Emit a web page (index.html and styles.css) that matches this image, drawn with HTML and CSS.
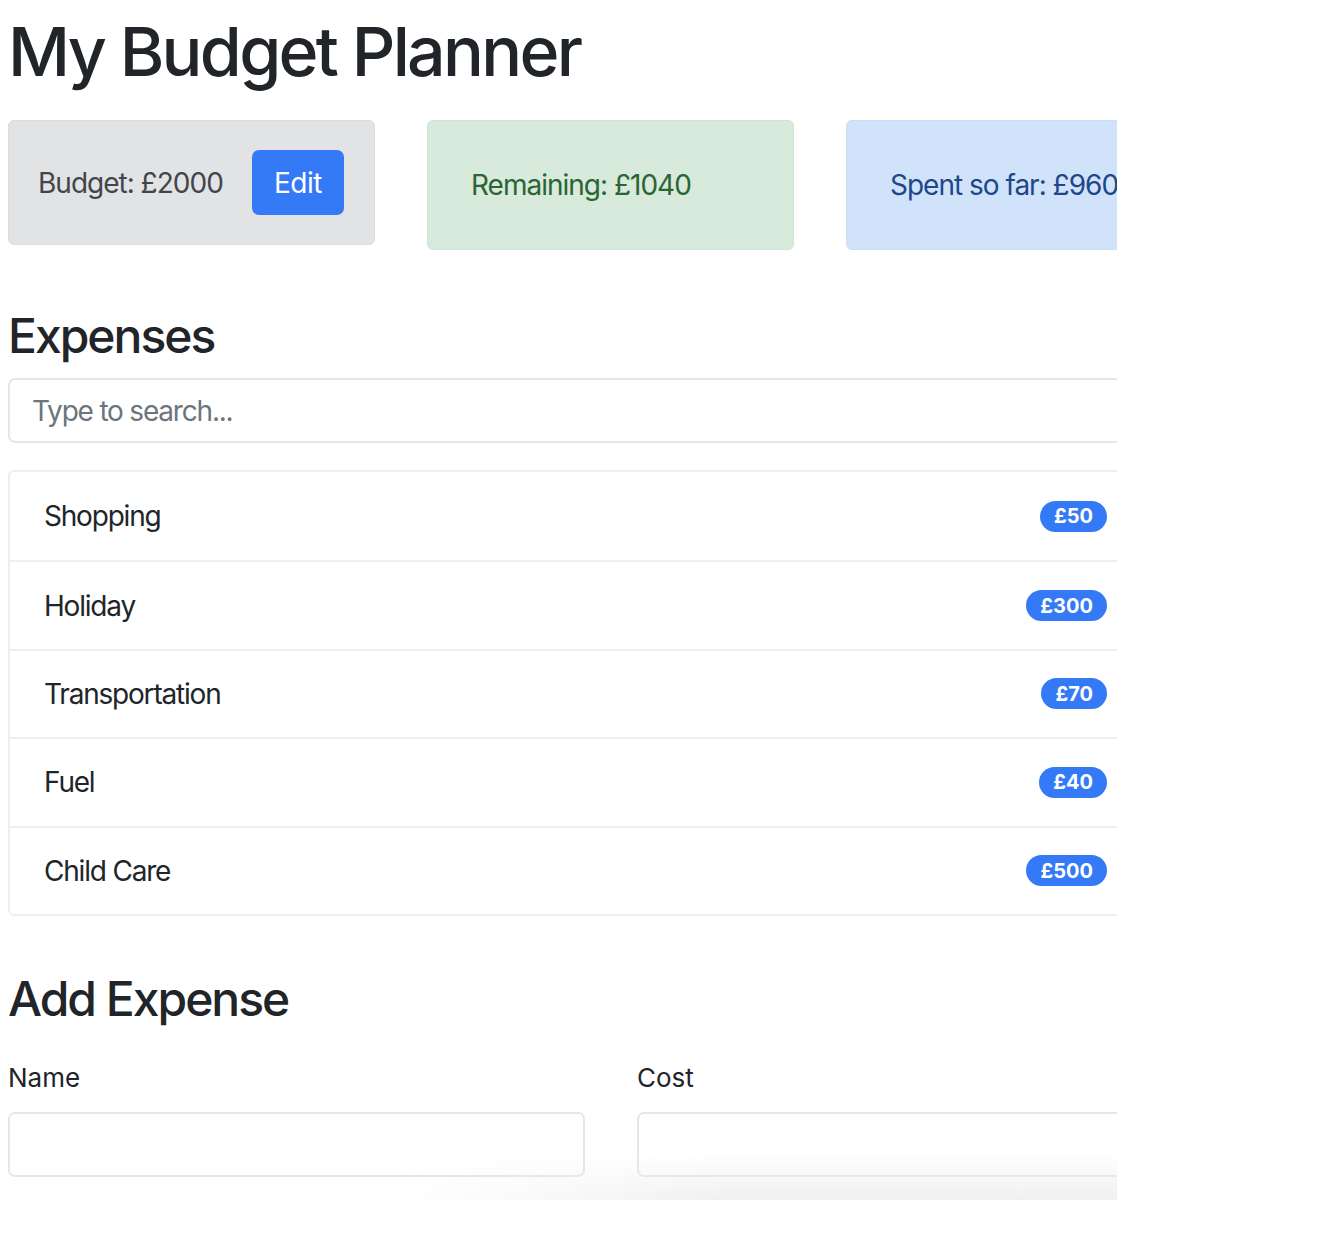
FILE: index.html
```html
<!DOCTYPE html>
<html lang="en">
<head>
<meta charset="utf-8">
<title>My Budget Planner</title>
<link rel="stylesheet" href="styles.css">
</head>
<body>
<div class="frame">
  <div class="page">
    <h1 class="title">My Budget Planner</h1>
    <div class="cards">
      <div class="card card-budget"><span>Budget: £2000</span><button class="btn" type="button">Edit</button></div>
      <div class="card card-remaining"><span>Remaining: £1040</span></div>
      <div class="card card-spent"><span>Spent so far: £960</span></div>
    </div>
    <h3 class="section section-expenses">Expenses</h3>
    <input class="field search" type="text" placeholder="Type to search...">
    <ul class="list">
      <li class="item"><span>Shopping</span><div class="item-end"><span class="badge">£50</span><svg class="del" viewBox="0 0 24 24"><circle cx="12" cy="12" r="9" fill="none" stroke="currentColor" stroke-width="2"/><path d="M9 9l6 6M15 9l-6 6" stroke="currentColor" stroke-width="2"/></svg></div></li>
      <li class="item"><span>Holiday</span><div class="item-end"><span class="badge">£300</span><svg class="del" viewBox="0 0 24 24"><circle cx="12" cy="12" r="9" fill="none" stroke="currentColor" stroke-width="2"/><path d="M9 9l6 6M15 9l-6 6" stroke="currentColor" stroke-width="2"/></svg></div></li>
      <li class="item"><span>Transportation</span><div class="item-end"><span class="badge">£70</span><svg class="del" viewBox="0 0 24 24"><circle cx="12" cy="12" r="9" fill="none" stroke="currentColor" stroke-width="2"/><path d="M9 9l6 6M15 9l-6 6" stroke="currentColor" stroke-width="2"/></svg></div></li>
      <li class="item"><span>Fuel</span><div class="item-end"><span class="badge">£40</span><svg class="del" viewBox="0 0 24 24"><circle cx="12" cy="12" r="9" fill="none" stroke="currentColor" stroke-width="2"/><path d="M9 9l6 6M15 9l-6 6" stroke="currentColor" stroke-width="2"/></svg></div></li>
      <li class="item"><span>Child Care</span><div class="item-end"><span class="badge">£500</span><svg class="del" viewBox="0 0 24 24"><circle cx="12" cy="12" r="9" fill="none" stroke="currentColor" stroke-width="2"/><path d="M9 9l6 6M15 9l-6 6" stroke="currentColor" stroke-width="2"/></svg></div></li>
    </ul>
    <h3 class="section section-add">Add Expense</h3>
    <div class="form-row">
      <div class="form-col"><label class="label" for="name">Name</label><input class="field" id="name" type="text"></div>
      <div class="form-col"><label class="label" for="cost">Cost</label><input class="field" id="cost" type="text"></div>
    </div>
  </div>
</div>
</body>
</html>
```

FILE: styles.css
```css
html, body {
  margin: 0;
  padding: 0;
  background: #ffffff;
}

body {
  font-family: "Inter", "Roboto", "Liberation Sans", sans-serif;
  color: #212529;
}

.frame {
  position: relative;
  width: 1117px;
  height: 1200px;
  overflow: hidden;
  background: #ffffff;
}

.frame::after {
  content: "";
  position: absolute;
  left: 0;
  right: 0;
  bottom: 0;
  height: 48px;
  background: linear-gradient(to bottom, rgba(238, 238, 240, 0), rgba(238, 238, 240, 0.85));
  -webkit-mask-image: linear-gradient(to right, transparent 400px, #000 720px);
  mask-image: linear-gradient(to right, transparent 400px, #000 720px);
  pointer-events: none;
}

.page {
  width: 1206px;
  padding-left: 8px;
}

.title {
  margin: 0;
  padding-top: 9px;
  font-size: 68px;
  line-height: 84px;
  font-weight: 500;
  letter-spacing: -2.7px;
  color: #212529;
}

.cards {
  display: flex;
  align-items: flex-start;
  gap: 52px;
  margin-top: 27px;
}

.card {
  flex: 0 0 367px;
  box-sizing: border-box;
  display: flex;
  align-items: center;
  font-size: 28px;
  letter-spacing: -1px;
  border-radius: 6px;
  border: 1px solid transparent;
}

.card-budget {
  height: 125px;
  padding: 0 30px 0 29px;
  justify-content: space-between;
  background: #e2e3e5;
  border-color: #dcdde0;
  color: #41464b;
}

.card-remaining {
  height: 130px;
  padding: 0 43px;
  background: #d7eadb;
  border-color: #d0e5d4;
  color: #2a6533;
}

.card-spent {
  height: 130px;
  padding: 0 43px;
  background: #d1e3fb;
  border-color: #c9ddf8;
  color: #1e4789;
}

.btn {
  width: 92px;
  height: 65px;
  border: none;
  border-radius: 7px;
  background: #3479f6;
  color: #ffffff;
  font-family: inherit;
  font-size: 28px;
  letter-spacing: -0.5px;
  padding: 0;
}

.section {
  margin: 0;
  font-size: 48px;
  line-height: 60px;
  font-weight: 500;
  letter-spacing: -2px;
  color: #212529;
}

.section-expenses {
  margin-top: 56px;
}

.section-add {
  margin-top: 53px;
}

.field {
  display: block;
  box-sizing: border-box;
  width: 100%;
  height: 65px;
  margin: 0;
  padding: 0 22px;
  border: 2px solid #e4e6e9;
  border-radius: 7px;
  background: #ffffff;
  font-family: inherit;
  font-size: 28px;
  letter-spacing: -1.2px;
  color: #495057;
  outline: none;
}

.field::placeholder {
  color: #6c757d;
}

.search {
  margin-top: 12px;
}

.list {
  list-style: none;
  margin: 27px 0 0;
  padding: 0;
  border: 2px solid #eceef0;
  border-radius: 6px;
}

.item {
  box-sizing: border-box;
  height: 88.4px;
  display: flex;
  align-items: center;
  justify-content: space-between;
  padding: 0 36px 0 34px;
  border-top: 2px solid #eceef0;
  font-size: 28px;
  letter-spacing: -1.2px;
  color: #212529;
}

.item:first-child {
  border-top: none;
}

.item-end {
  display: flex;
  align-items: center;
  gap: 34px;
}

.badge {
  display: inline-flex;
  align-items: center;
  height: 31px;
  padding: 0 14px;
  border-radius: 16px;
  background: #3479f6;
  color: #ffffff;
  font-size: 20px;
  font-weight: 700;
  letter-spacing: 0;
}

.del {
  width: 35px;
  height: 35px;
  color: #212529;
}

.form-row {
  display: flex;
  gap: 52px;
  margin-top: 33px;
}

.form-col {
  flex: 1 1 0;
  display: flex;
  flex-direction: column;
}

.label {
  font-size: 26px;
  line-height: 32px;
  color: #212529;
  margin-bottom: 18px;
}
```
